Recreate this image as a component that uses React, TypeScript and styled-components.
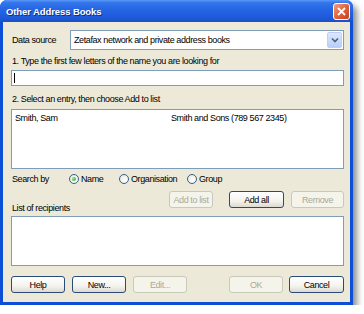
import styled, { createGlobalStyle, css } from "styled-components";

const Global = createGlobalStyle`
  html, body {
    margin: 0;
    padding: 0;
    background: #ffffff;
  }
  body {
    font-family: "Liberation Sans", Arial, sans-serif;
    font-size: 9px;
    letter-spacing: -0.4px;
    color: #000;
  }
`;

const Window = styled.div`
  width: 353px;
  height: 305px;
  display: flex;
  flex-direction: column;
  background: #0a4fd6;
  border-radius: 7px 7px 0 0;
  box-shadow: 4px 5px 6px rgba(0, 0, 0, 0.45);
  overflow: hidden;
`;

const TitleBar = styled.div`
  height: 22px;
  flex: none;
  display: flex;
  align-items: center;
  justify-content: space-between;
  padding: 0 3px 0 6px;
  background: linear-gradient(
    #5a98f8 0%,
    #3477ec 12%,
    #2666e4 40%,
    #1f5cdc 75%,
    #1a50c6 100%
  );
`;

const Title = styled.div`
  font-weight: bold;
  font-size: 9.5px;
  letter-spacing: -0.1px;
  color: #ffffff;
  text-shadow: 1px 1px 0 #0a2f90;
`;

const CloseButton = styled.div`
  width: 15px;
  height: 15px;
  border: 1px solid #ffffff;
  border-radius: 3px;
  background: linear-gradient(135deg, #f0a080 0%, #e2633f 50%, #c4421c 100%);
  display: flex;
  align-items: center;
  justify-content: center;
`;

const Client = styled.div`
  flex: 1;
  margin: 0 3px 3px 3px;
  background: #ece9d8;
  padding: 8px 6px 0 8px;
  display: flex;
  flex-direction: column;
`;

const Row = styled.div<{ $top?: number; $height?: number }>`
  display: flex;
  align-items: center;
  margin-top: ${({ $top }) => $top ?? 0}px;
  height: ${({ $height }) => ($height ? `${$height}px` : "auto")};
`;

const Label = styled.div<{ $width?: number; $top?: number }>`
  width: ${({ $width }) => ($width ? `${$width}px` : "auto")};
  flex: none;
  line-height: 11px;
  padding-left: 1px;
  margin-top: ${({ $top }) => $top ?? 0}px;
`;

const field = css`
  background: #ffffff;
  border: 1px solid #7f9db9;
  box-sizing: border-box;
`;

const Select = styled.div`
  ${field};
  flex: 1;
  height: 20px;
  display: flex;
  align-items: center;
  padding: 0 1px 0 3px;
`;

const SelectText = styled.div`
  flex: 1;
`;

const DropArrow = styled.div`
  width: 15px;
  height: 16px;
  border-radius: 2px;
  border: 1px solid #bccff8;
  box-sizing: border-box;
  background: linear-gradient(#dde8fe, #b9cdf9);
  display: flex;
  align-items: center;
  justify-content: center;
`;

const TextInput = styled.div`
  ${field};
  height: 16px;
  margin-top: 3px;
  padding: 2px 0 0 2px;
`;

const Caret = styled.div`
  width: 1px;
  height: 10px;
  background: #000;
`;

const ListBox = styled.div<{ $height: number; $top?: number }>`
  ${field};
  height: ${({ $height }) => $height}px;
  margin-top: ${({ $top }) => $top ?? 0}px;
  padding: 3px 3px;
`;

const ListRow = styled.div`
  display: flex;
  line-height: 11px;
`;

const Cell = styled.div<{ $width?: number }>`
  width: ${({ $width }) => ($width ? `${$width}px` : "auto")};
`;

const RadioGroup = styled.div`
  display: flex;
  align-items: center;
`;

const RadioItem = styled.label<{ $width?: number }>`
  width: ${({ $width }) => ($width ? `${$width}px` : "auto")};
  display: flex;
  align-items: center;
  gap: 2px;
`;

const RadioCircle = styled.span<{ $checked?: boolean }>`
  width: 10px;
  height: 10px;
  box-sizing: border-box;
  border-radius: 50%;
  border: 1px solid #3a5f8a;
  background: radial-gradient(circle at 65% 65%, #ffffff 0%, #e4e2d8 100%);
  display: flex;
  align-items: center;
  justify-content: center;
  &::after {
    content: "";
    display: ${({ $checked }) => ($checked ? "block" : "none")};
    width: 4px;
    height: 4px;
    border-radius: 50%;
    background: radial-gradient(circle at 35% 35%, #8fe88f, #22a322);
  }
`;

const ActionRow = styled.div`
  display: flex;
  justify-content: space-between;
  height: 23px;
  margin-top: 6px;
`;

const ButtonGroup = styled.div<{ $gap: number }>`
  display: flex;
  gap: ${({ $gap }) => $gap}px;
  align-items: flex-start;
`;

const Button = styled.div<{ $disabled?: boolean; $wide?: number; $after?: number }>`
  width: ${({ $wide }) => $wide ?? 55}px;
  height: 17px;
  margin-right: ${({ $after }) => $after ?? 0}px;
  box-sizing: border-box;
  border-radius: 3px;
  display: flex;
  align-items: center;
  justify-content: center;
  ${({ $disabled }) =>
    $disabled
      ? css`
          border: 1px solid #cac8bb;
          background: #f5f4ea;
          color: #aca899;
        `
      : css`
          border: 1px solid #2a4a7a;
          background: linear-gradient(#ffffff 0%, #f4f3ee 60%, #dcdad0 100%);
          color: #000;
        `}
`;

const Footer = styled.div`
  display: flex;
  justify-content: space-between;
  margin-top: 10px;
`;

const EndLabel = styled.div`
  align-self: flex-end;
  line-height: 11px;
  padding-left: 1px;
`;

export default function App() {
  return (
    <>
      <Global />
      <Window>
        <TitleBar>
          <Title>Other Address Books</Title>
          <CloseButton>
            <svg width="9" height="9" viewBox="0 0 9 9">
              <path d="M1 1 L8 8 M8 1 L1 8" stroke="#fff" strokeWidth="1.8" />
            </svg>
          </CloseButton>
        </TitleBar>
        <Client>
          <Row>
            <Label $width={58}>Data source</Label>
            <Select>
              <SelectText>Zetafax network and private address books</SelectText>
              <DropArrow>
                <svg width="8" height="6" viewBox="0 0 8 6">
                  <path d="M1 1.5 L4 4.5 L7 1.5" stroke="#4d6185" strokeWidth="1.6" fill="none" />
                </svg>
              </DropArrow>
            </Select>
          </Row>
          <Label $top={6}>1. Type the first few letters of the name you are looking for</Label>
          <TextInput>
            <Caret />
          </TextInput>
          <Label $top={8}>2. Select an entry, then choose Add to list</Label>
          <ListBox $height={60} $top={4}>
            <ListRow>
              <Cell $width={156}>Smith, Sam</Cell>
              <Cell>Smith and Sons (789 567 2345)</Cell>
            </ListRow>
          </ListBox>
          <Row $top={4} $height={12}>
            <Label $width={57}>Search by</Label>
            <RadioGroup>
              <RadioItem $width={50}>
                <RadioCircle $checked />
                Name
              </RadioItem>
              <RadioItem $width={68}>
                <RadioCircle />
                Organisation
              </RadioItem>
              <RadioItem>
                <RadioCircle />
                Group
              </RadioItem>
            </RadioGroup>
          </Row>
          <ActionRow>
            <EndLabel>List of recipients</EndLabel>
            <ButtonGroup $gap={7}>
              <Button $disabled $wide={44} $after={9}>Add to list</Button>
              <Button>Add all</Button>
              <Button $disabled $wide={53}>Remove</Button>
            </ButtonGroup>
          </ActionRow>
          <ListBox $height={50} $top={2} />
          <Footer>
            <ButtonGroup $gap={7}>
              <Button $wide={54}>Help</Button>
              <Button $wide={54}>New...</Button>
              <Button $disabled $wide={54}>Edit...</Button>
            </ButtonGroup>
            <ButtonGroup $gap={6}>
              <Button $disabled $wide={54}>OK</Button>
              <Button $wide={55}>Cancel</Button>
            </ButtonGroup>
          </Footer>
        </Client>
      </Window>
    </>
  );
}
